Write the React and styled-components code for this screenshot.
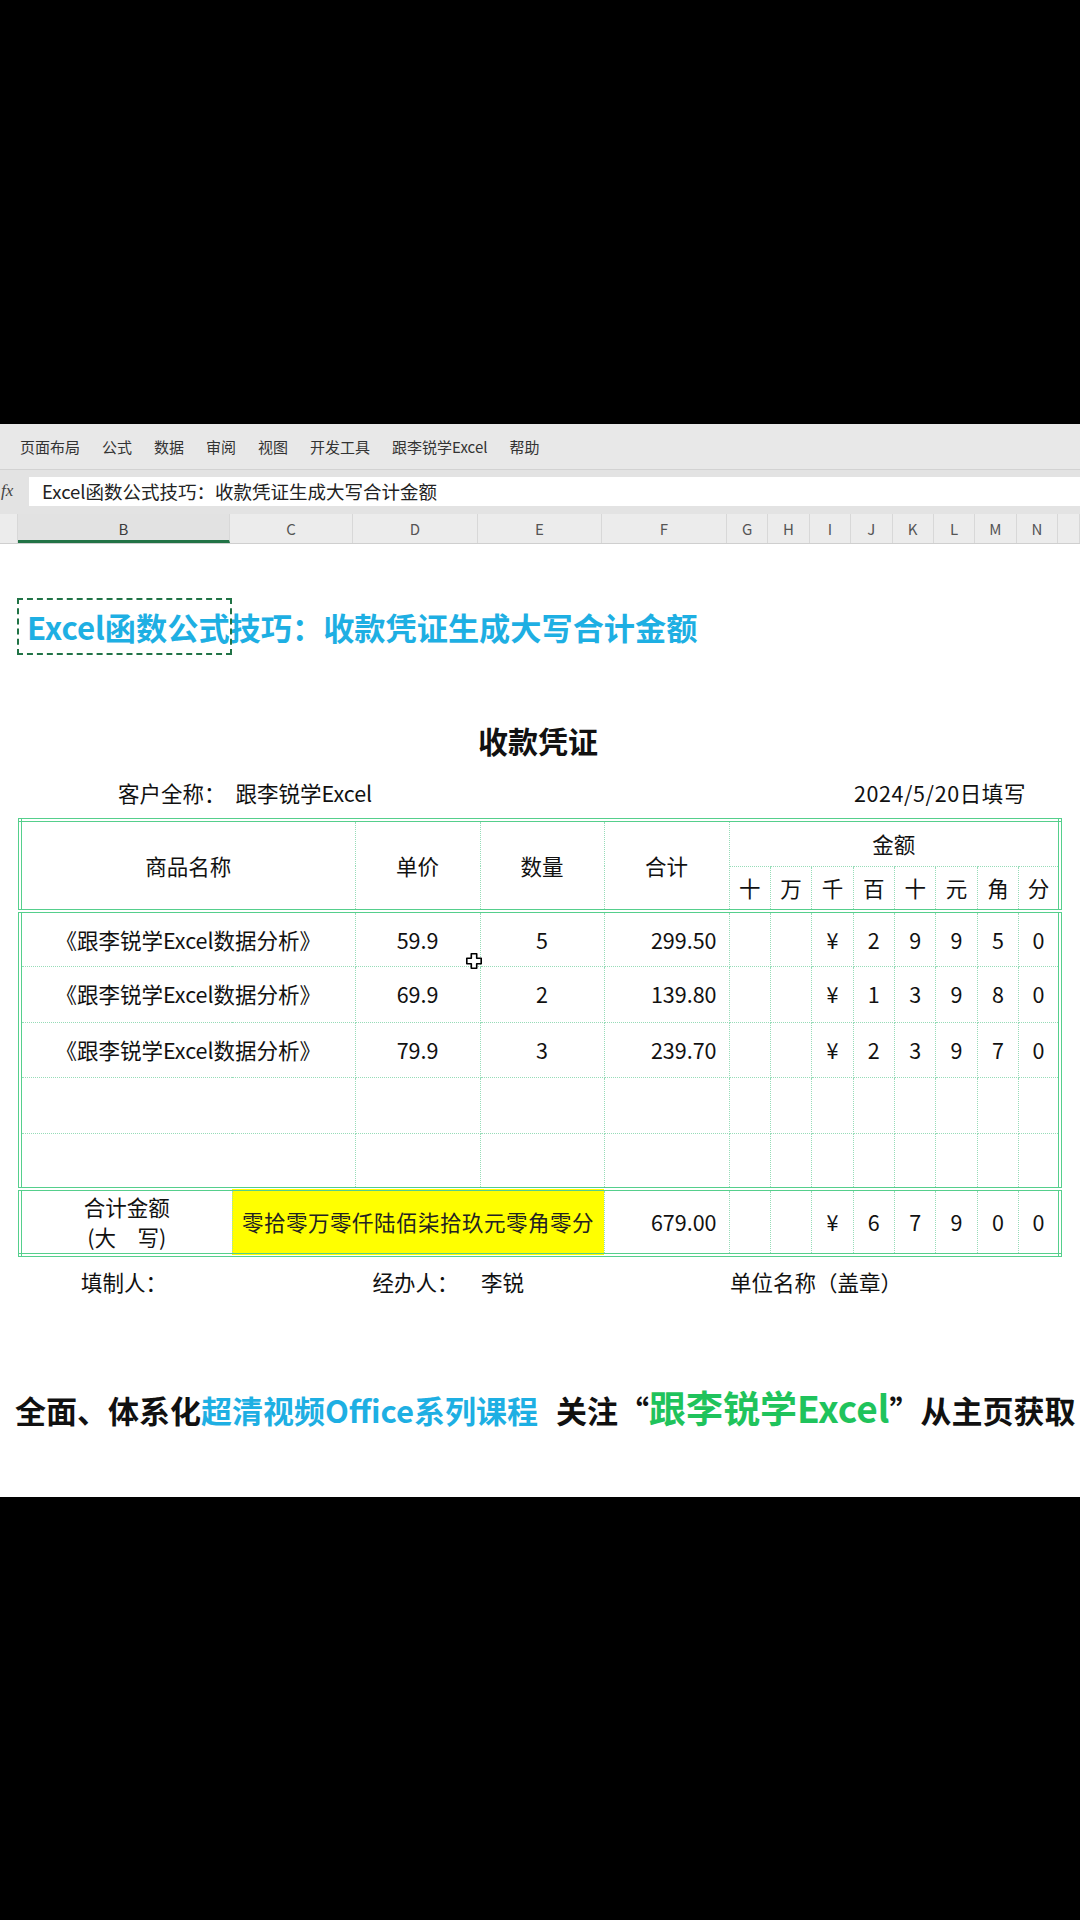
import React from "react";
import styled, { createGlobalStyle } from "styled-components";

// Excel window: ribbon tabs, formula bar, column headers, receipt sheet

const FONT = `"Noto Sans CJK SC", "Noto Sans", "Liberation Sans", sans-serif`;
const GRID_LINE = "#97dcb8";
const BORDER_GREEN = "#55cf8c";
const EXCEL_GREEN = "#217346";
const CYAN = "#1eafe3";

const COL_WIDTHS = [212, 123, 125, 124, 125, 41.375, 41.375, 41.375, 41.375, 41.375, 41.375, 41.375, 41.375];
const COL_TEMPLATE = COL_WIDTHS.map((w) => `${w}px`).join(" ");
const LETTERS = ["B", "C", "D", "E", "F", "G", "H", "I", "J", "K", "L", "M", "N"];

const menus = ["页面布局", "公式", "数据", "审阅", "视图", "开发工具", "跟李锐学Excel", "帮助"];
const units = ["十", "万", "千", "百", "十", "元", "角", "分"];

const rows = [
    { name: "《跟李锐学Excel数据分析》", price: "59.9", qty: "5", total: "299.50", digits: ["", "", "¥", "2", "9", "9", "5", "0"] },
    { name: "《跟李锐学Excel数据分析》", price: "69.9", qty: "2", total: "139.80", digits: ["", "", "¥", "1", "3", "9", "8", "0"] },
    { name: "《跟李锐学Excel数据分析》", price: "79.9", qty: "3", total: "239.70", digits: ["", "", "¥", "2", "3", "9", "7", "0"] },
    { name: "", price: "", qty: "", total: "", digits: ["", "", "", "", "", "", "", ""] },
    { name: "", price: "", qty: "", total: "", digits: ["", "", "", "", "", "", "", ""] },
];

const totalDigits = ["", "", "¥", "6", "7", "9", "0", "0"];

export default function App() {
    return (
        <Page>
            <GlobalStyle />
            <BlackBand $h={424} />
            <MenuBar>
                {menus.map((m) => (
                    <MenuItem key={m}>{m}</MenuItem>
                ))}
            </MenuBar>
            <FormulaBar>
                <FxLabel>fx</FxLabel>
                <FormulaField>Excel函数公式技巧：收款凭证生成大写合计金额</FormulaField>
            </FormulaBar>
            <ColumnHeader>
                <HeaderCorner />
                {LETTERS.map((l) => (
                    <ColLetter key={l} $active={l === "B"}>{l}</ColLetter>
                ))}
                <ColLetter />
            </ColumnHeader>

            <Sheet>
                <SheetBody>
                    <TitleRow>
                        <SelectionBox />
                        <Title>Excel函数公式技巧：收款凭证生成大写合计金额</Title>
                    </TitleRow>

                    <Heading>收款凭证</Heading>

                    <CustomerRow>
                        <span>
                            客户全称：<CustomerName>跟李锐学Excel</CustomerName>
                        </span>
                        <DateText>2024/5/20日填写</DateText>
                    </CustomerRow>

                    <TableWrap>
                        <Voucher>
                            <colgroup>
                                {COL_WIDTHS.map((w, i) => (
                                    <Col key={i} $w={w} />
                                ))}
                            </colgroup>
                            <tbody>
                                <HeadRow $h={46}>
                                    <Th colSpan={2} rowSpan={2}>商品名称</Th>
                                    <Th rowSpan={2}>单价</Th>
                                    <Th rowSpan={2}>数量</Th>
                                    <Th rowSpan={2}>合计</Th>
                                    <Th colSpan={8} $thin>金额</Th>
                                </HeadRow>
                                <HeadRow $h={45}>
                                    {units.map((u, i) => (
                                        <Th key={i}>{u}</Th>
                                    ))}
                                </HeadRow>
                                {rows.map((r, i) => (
                                    <DataRow key={i}>
                                        <Td colSpan={2}>{r.name}</Td>
                                        <Td>{r.price}</Td>
                                        <Td>{r.qty}</Td>
                                        <Td $align="right">{r.total}</Td>
                                        {r.digits.map((d, j) => (
                                            <Td key={j}>{d}</Td>
                                        ))}
                                    </DataRow>
                                ))}
                                <TotalRow>
                                    <Td $top>
                                        <TotalLabel>
                                            合计金额
                                            <br />
                                            (大　写)
                                        </TotalLabel>
                                    </Td>
                                    <Td $top $fill colSpan={3}>
                                        <Words>零拾零万零仟陆佰柒拾玖元零角零分</Words>
                                    </Td>
                                    <Td $top $align="right">679.00</Td>
                                    {totalDigits.map((d, j) => (
                                        <Td key={j} $top>{d}</Td>
                                    ))}
                                </TotalRow>
                            </tbody>
                        </Voucher>
                        <Cursor viewBox="0 0 20 20">
                            <path
                                d="M7 2h6v5h5v6h-5v5H7v-5H2V7h5z"
                                fill="#fff"
                                stroke="#000"
                                strokeWidth="1.8"
                                strokeLinejoin="round"
                            />
                        </Cursor>
                    </TableWrap>

                    <FooterRow>
                        <FooterCell>填制人：</FooterCell>
                        <FooterCell />
                        <FooterCell>经办人：</FooterCell>
                        <FooterCell $align="left">李锐</FooterCell>
                        <FooterCell />
                        <FooterCell $align="left" $span={8}>单位名称（盖章）</FooterCell>
                    </FooterRow>
                </SheetBody>

                <Promo>
                    <PromoText>全面、体系化</PromoText>
                    <PromoText $color={CYAN}>超清视频Office系列课程</PromoText>
                    <PromoText $gap>关注“</PromoText>
                    <PromoText $color="#1fc35c" $big>跟李锐学Excel</PromoText>
                    <PromoText>”从主页获取</PromoText>
                </Promo>
            </Sheet>
        </Page>
    );
}

const GlobalStyle = createGlobalStyle`
    html, body {
        margin: 0;
        padding: 0;
        background: #000;
    }
    body {
        font-family: ${FONT};
    }
`;

const Page = styled.div`
    width: 1080px;
    height: 1920px;
    background: #000;
    display: flex;
    flex-direction: column;
    overflow: hidden;
`;

const BlackBand = styled.div`
    height: ${(p) => p.$h}px;
    flex-shrink: 0;
`;

const MenuBar = styled.div`
    height: 46px;
    background: #e8e8e8;
    display: flex;
    align-items: center;
    gap: 22px;
    padding-left: 20px;
    border-bottom: 1px solid #d2d2d2;
    box-sizing: border-box;
`;

const MenuItem = styled.span`
    font-size: 15px;
    color: #333;
`;

const FormulaBar = styled.div`
    height: 44px;
    background: #e3e3e3;
    display: flex;
    align-items: center;
    box-sizing: border-box;
    padding-bottom: 2px;
`;

const FxLabel = styled.span`
    width: 28px;
    padding-left: 1px;
    font-family: "Liberation Serif", serif;
    font-style: italic;
    font-size: 17px;
    color: #444;
`;

const FormulaField = styled.div`
    flex: 1;
    height: 29px;
    background: #fff;
    display: flex;
    align-items: center;
    padding-left: 13px;
    font-size: 18.5px;
    color: #222;
`;

const ColumnHeader = styled.div`
    height: 30px;
    background: #ececec;
    display: grid;
    grid-template-columns: 18px ${COL_TEMPLATE} 1fr;
    border-bottom: 1px solid #cfcfcf;
    box-sizing: border-box;
`;

const HeaderCorner = styled.div`
    border-right: 1px solid #d8d8d8;
`;

const ColLetter = styled.div`
    display: flex;
    align-items: center;
    justify-content: center;
    font-size: 15px;
    color: ${(p) => (p.$active ? "#3b3b3b" : "#555")};
    background: ${(p) => (p.$active ? "#e2e2e2" : "transparent")};
    border-right: 1px solid #d8d8d8;
    border-bottom: ${(p) => (p.$active ? `3px solid ${EXCEL_GREEN}` : "none")};
    box-sizing: border-box;
    padding-top: ${(p) => (p.$active ? "3px" : "0")};
`;

const Sheet = styled.div`
    height: 953px;
    background: #fff;
    display: flex;
    flex-direction: column;
    flex-shrink: 0;
`;

const SheetBody = styled.div`
    margin-left: 18px;
    width: 1040px;
    display: flex;
    flex-direction: column;
`;

const TitleRow = styled.div`
    position: relative;
    height: 57px;
    margin-top: 54px;
    display: flex;
    align-items: center;
    padding-left: 9px;
`;

const SelectionBox = styled.div`
    position: absolute;
    left: -1px;
    top: 0;
    width: 215px;
    height: 57px;
    border: 2px dashed ${EXCEL_GREEN};
    box-sizing: border-box;
`;

const Title = styled.h1`
    margin: 0;
    font-size: 31.2px;
    font-weight: 700;
    line-height: 1;
    color: ${CYAN};
    white-space: nowrap;
`;

const Heading = styled.h2`
    margin: 63px 0 0;
    height: 45px;
    line-height: 45px;
    text-align: center;
    font-size: 30px;
    font-weight: 700;
    color: #111;
`;

const CustomerRow = styled.div`
    margin-top: 13px;
    height: 32px;
    display: flex;
    align-items: center;
    justify-content: space-between;
    padding: 0 32px 0 100px;
    font-size: 21.5px;
    color: #111;
`;

const CustomerName = styled.span`
    margin-left: 10px;
`;

const DateText = styled.span`
    letter-spacing: 0.6px;
`;

const TableWrap = styled.div`
    position: relative;
    margin-top: 10px;
`;

const Voucher = styled.table`
    width: 1040px;
    table-layout: fixed;
    border-collapse: collapse;
    border: 4px double ${BORDER_GREEN};
    font-size: 21.5px;
    color: #111;
`;

const Col = styled.col`
    width: ${(p) => p.$w}px;
`;

const HeadRow = styled.tr`
    height: ${(p) => p.$h}px;
`;

const DataRow = styled.tr`
    height: 55.5px;
`;

const TotalRow = styled.tr`
    height: 66px;
`;

const Th = styled.td`
    padding: 0;
    text-align: center;
    vertical-align: middle;
    font-weight: 400;
    line-height: 1.2;
    border: 1px dotted ${GRID_LINE};
    border-bottom: ${(p) => (p.$thin ? `1px dotted ${GRID_LINE}` : `4px double ${BORDER_GREEN}`)};
`;

const Td = styled.td`
    padding: 0 ${(p) => (p.$align === "right" ? "12px" : "0")} 0 0;
    text-align: ${(p) => p.$align || "center"};
    vertical-align: middle;
    line-height: 1.2;
    white-space: nowrap;
    border: 1px dotted ${GRID_LINE};
    border-top: ${(p) => (p.$top ? `4px double ${BORDER_GREEN}` : `1px dotted ${GRID_LINE}`)};
    background: ${(p) => (p.$fill ? "#ffff00" : "transparent")};
`;

const TotalLabel = styled.div`
    line-height: 30px;
`;

const Words = styled.span`
    letter-spacing: 0.5px;
    color: #222;
`;

const Cursor = styled.svg`
    position: absolute;
    left: 447px;
    top: 134px;
    width: 18px;
    height: 18px;
`;

const FooterRow = styled.div`
    margin-top: 9px;
    height: 30px;
    display: grid;
    grid-template-columns: ${COL_TEMPLATE};
    align-items: center;
    font-size: 21.5px;
    color: #111;
`;

const FooterCell = styled.div`
    text-align: ${(p) => p.$align || "center"};
    grid-column: span ${(p) => p.$span || 1};
    white-space: nowrap;
    padding-left: ${(p) => (p.$align === "left" ? "3px" : "0")};
`;

const Promo = styled.div`
    margin-top: 84px;
    padding-left: 15px;
    height: 48px;
    display: flex;
    align-items: baseline;
    white-space: nowrap;
`;

const PromoText = styled.span`
    font-size: ${(p) => (p.$big ? "37px" : "31px")};
    font-weight: 700;
    color: ${(p) => p.$color || "#111"};
    margin-left: ${(p) => (p.$gap ? "18px" : "0")};
`;
